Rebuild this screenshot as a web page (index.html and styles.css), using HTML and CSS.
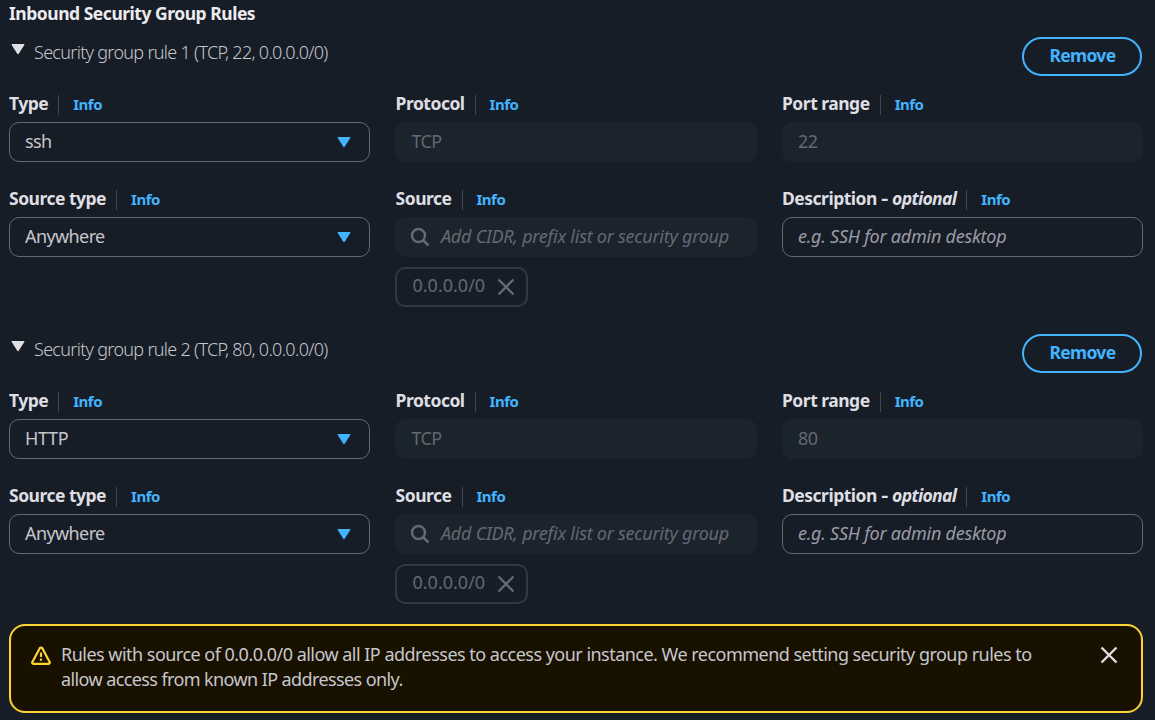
FILE: index.html
```
<!DOCTYPE html>
<html lang="en">
<head>
<meta charset="utf-8">
<title>Inbound Security Group Rules</title>
<link rel="stylesheet" href="styles.css">
</head>
<body>
<svg class="defs" aria-hidden="true">
  <symbol id="caret" viewBox="0 0 14 12"><path d="M1.2 1h11.600a.6.6 0 0 1 .5 1L7.900 10.500a1.100 1.100 0 0 1-1.800 0L.7 2a.6.6 0 0 1 .5-1z" fill="currentColor"/></symbol>
  <symbol id="close" viewBox="0 0 18 18"><path d="M1.500 1.500l15 15M16.500 1.500l-15 15" fill="none" stroke="currentColor" stroke-width="2.400"/></symbol>
  <symbol id="search" viewBox="0 0 20 20"><circle cx="8.500" cy="8.500" r="6.500" fill="none" stroke="currentColor" stroke-width="2.500"/><path d="M13 13l5.500 5.500" fill="none" stroke="currentColor" stroke-width="2.500"/></symbol>
</svg>
<main class="panel">
  <h1 class="title">Inbound Security Group Rules</h1>

  <section class="rule">
    <header class="rule-head">
      <svg class="toggle"><use href="#caret"/></svg>
      <span class="rule-name">Security group rule 1 (TCP, 22, 0.0.0.0/0)</span>
      <button class="remove">Remove</button>
    </header>
    <div class="grid">
      <div class="field"><div class="label"><b class="name">Type</b><a class="info">Info</a></div><div class="box select"><span>ssh</span><svg class="arrow"><use href="#caret"/></svg></div></div>
      <div class="field middle"><div class="label"><b class="name">Protocol</b><a class="info">Info</a></div><div class="box disabled">TCP</div></div>
      <div class="field"><div class="label"><b class="name">Port range</b><a class="info">Info</a></div><div class="box disabled">22</div></div>
      <div class="field"><div class="label"><b class="name">Source type</b><a class="info">Info</a></div><div class="box select"><span>Anywhere</span><svg class="arrow"><use href="#caret"/></svg></div></div>
      <div class="field middle"><div class="label"><b class="name">Source</b><a class="info">Info</a></div><div class="box disabled search"><svg class="lens"><use href="#search"/></svg><span class="hint">Add CIDR, prefix list or security group</span></div><div class="chip"><span>0.0.0.0/0</span><svg class="x"><use href="#close"/></svg></div></div>
      <div class="field"><div class="label"><b class="name">Description <span class="dash">-</span> <i>optional</i></b><a class="info">Info</a></div><div class="box"><span class="hint">e.g. SSH for admin desktop</span></div></div>
    </div>
  </section>

  <section class="rule">
    <header class="rule-head">
      <svg class="toggle"><use href="#caret"/></svg>
      <span class="rule-name">Security group rule 2 (TCP, 80, 0.0.0.0/0)</span>
      <button class="remove">Remove</button>
    </header>
    <div class="grid">
      <div class="field"><div class="label"><b class="name">Type</b><a class="info">Info</a></div><div class="box select"><span class="caps">HTTP</span><svg class="arrow"><use href="#caret"/></svg></div></div>
      <div class="field middle"><div class="label"><b class="name">Protocol</b><a class="info">Info</a></div><div class="box disabled">TCP</div></div>
      <div class="field"><div class="label"><b class="name">Port range</b><a class="info">Info</a></div><div class="box disabled">80</div></div>
      <div class="field"><div class="label"><b class="name">Source type</b><a class="info">Info</a></div><div class="box select"><span>Anywhere</span><svg class="arrow"><use href="#caret"/></svg></div></div>
      <div class="field middle"><div class="label"><b class="name">Source</b><a class="info">Info</a></div><div class="box disabled search"><svg class="lens"><use href="#search"/></svg><span class="hint">Add CIDR, prefix list or security group</span></div><div class="chip"><span>0.0.0.0/0</span><svg class="x"><use href="#close"/></svg></div></div>
      <div class="field"><div class="label"><b class="name">Description <span class="dash">-</span> <i>optional</i></b><a class="info">Info</a></div><div class="box"><span class="hint">e.g. SSH for admin desktop</span></div></div>
    </div>
  </section>

  <aside class="alert">
    <svg class="warn" viewBox="0 0 20 20"><path d="M8.600 2.400a1.600 1.600 0 0 1 2.800 0l7.200 13.500a1.200 1.200 0 0 1-1.100 1.900H2.500a1.200 1.200 0 0 1-1.100-1.900z" fill="none" stroke="currentColor" stroke-width="2.200" stroke-linejoin="round"/><path d="M10 6.500v4.500M10 12.500v2.200" stroke="currentColor" stroke-width="2.200"/></svg>
    <p class="message">Rules with source of 0.0.0.0/0 allow all IP addresses to access your instance. We recommend setting security group rules to<br><span class="tail">allow access from known IP addresses only.</span></p>
    <svg class="dismiss"><use href="#close"/></svg>
  </aside>
</main>
</body>
</html>
```

FILE: styles.css
```
* { box-sizing: border-box; }
body { margin: 0; background: #171d26; color: #c6c6cd; font: 18px/24px "Noto Sans", sans-serif; white-space: nowrap; overflow: hidden; }
svg { display: block; flex: none; }
.defs { display: none; }
.panel { width: 1155px; height: 720px; padding: 1px 12px 0 9px; }
.title { margin: 0; height: 36px; font-size: 17.5px; line-height: 25px; font-weight: 700; color: #ebebf0; letter-spacing: -0.48px; }
.rule { height: 297px; }
.rule-head { display: flex; align-items: flex-start; height: 58px; padding-right: 1px; }
.toggle { width: 14px; height: 12px; margin: 6px 9px 0 2px; color: #dedee3; }
.rule-name { margin: 3px auto 0 0; font-weight: 300; letter-spacing: -0.7px; }
.remove { width: 120px; height: 39px; padding: 0 0 4px 1px; border: 2px solid #42b4ff; border-radius: 20px; background: none; color: #42b4ff; font: 700 17.5px/24px "Noto Sans", sans-serif; letter-spacing: -0.7px; }
.grid { display: grid; grid-template-columns: 361px 362px 361px; column-gap: 25px; }
.field { height: 95px; }
.label { display: flex; align-items: center; height: 27px; padding-bottom: 7px; }
.middle .label { padding-left: 0.6px; }
.name { height: 20px; padding-right: 10px; border-right: 1px solid #424650; font-size: 17.5px; line-height: 16px; font-weight: 700; color: #dedee3; letter-spacing: -0.5px; }
.name i { letter-spacing: -0.65px; }
.dash { display: inline-block; transform: scaleX(1.25); margin: 0 1px; }
.info { height: 20px; margin-left: 14px; color: #42b4ff; font-size: 15px; line-height: 18px; font-weight: 700; letter-spacing: -0.5px; }
.box { display: flex; align-items: center; height: 40px; padding: 0 15px 2px; border: 1px solid #656871; border-radius: 10px; letter-spacing: -0.6px; }
.disabled { border-color: #1b232d; background: #1b232d; color: #656871; }
.middle .box { padding-left: 15.500px; }
.select { justify-content: space-between; padding-right: 18px; }
.caps { letter-spacing: -0.3px; }
.arrow { width: 14px; height: 12px; margin-top: 1px; color: #42b4ff; }
.middle .search { padding-left: 14px; }
.lens { width: 20px; height: 20px; margin: 2px 11px 0 0; }
.hint { font-style: italic; letter-spacing: -0.25px; color: #9a9ba5; }
.disabled .hint { color: #656871; }
.chip { display: flex; align-items: center; width: 133px; height: 40px; margin-top: 10px; padding: 0 13px 3px 15.500px; border: 2px solid #333843; border-radius: 10px; color: #656871; }
.chip span { margin-top: -1px; }
.x { width: 18px; height: 18px; margin: 3px 0 0 11.500px; }
.alert { display: flex; width: 1134px; height: 89px; margin-top: -7px; padding: 16px 23px 0 20px; border: 2px solid #fbd332; border-radius: 16px; background: #191100; }
.warn { width: 20px; height: 20px; margin-top: 4px; color: #fbd332; }
.message { margin: 0 auto 0 10px; line-height: 25px; letter-spacing: -0.52px; }
.tail { letter-spacing: -0.6px; }
.dismiss { width: 18px; height: 18px; margin-top: 4px; color: #dedee3; }
```
